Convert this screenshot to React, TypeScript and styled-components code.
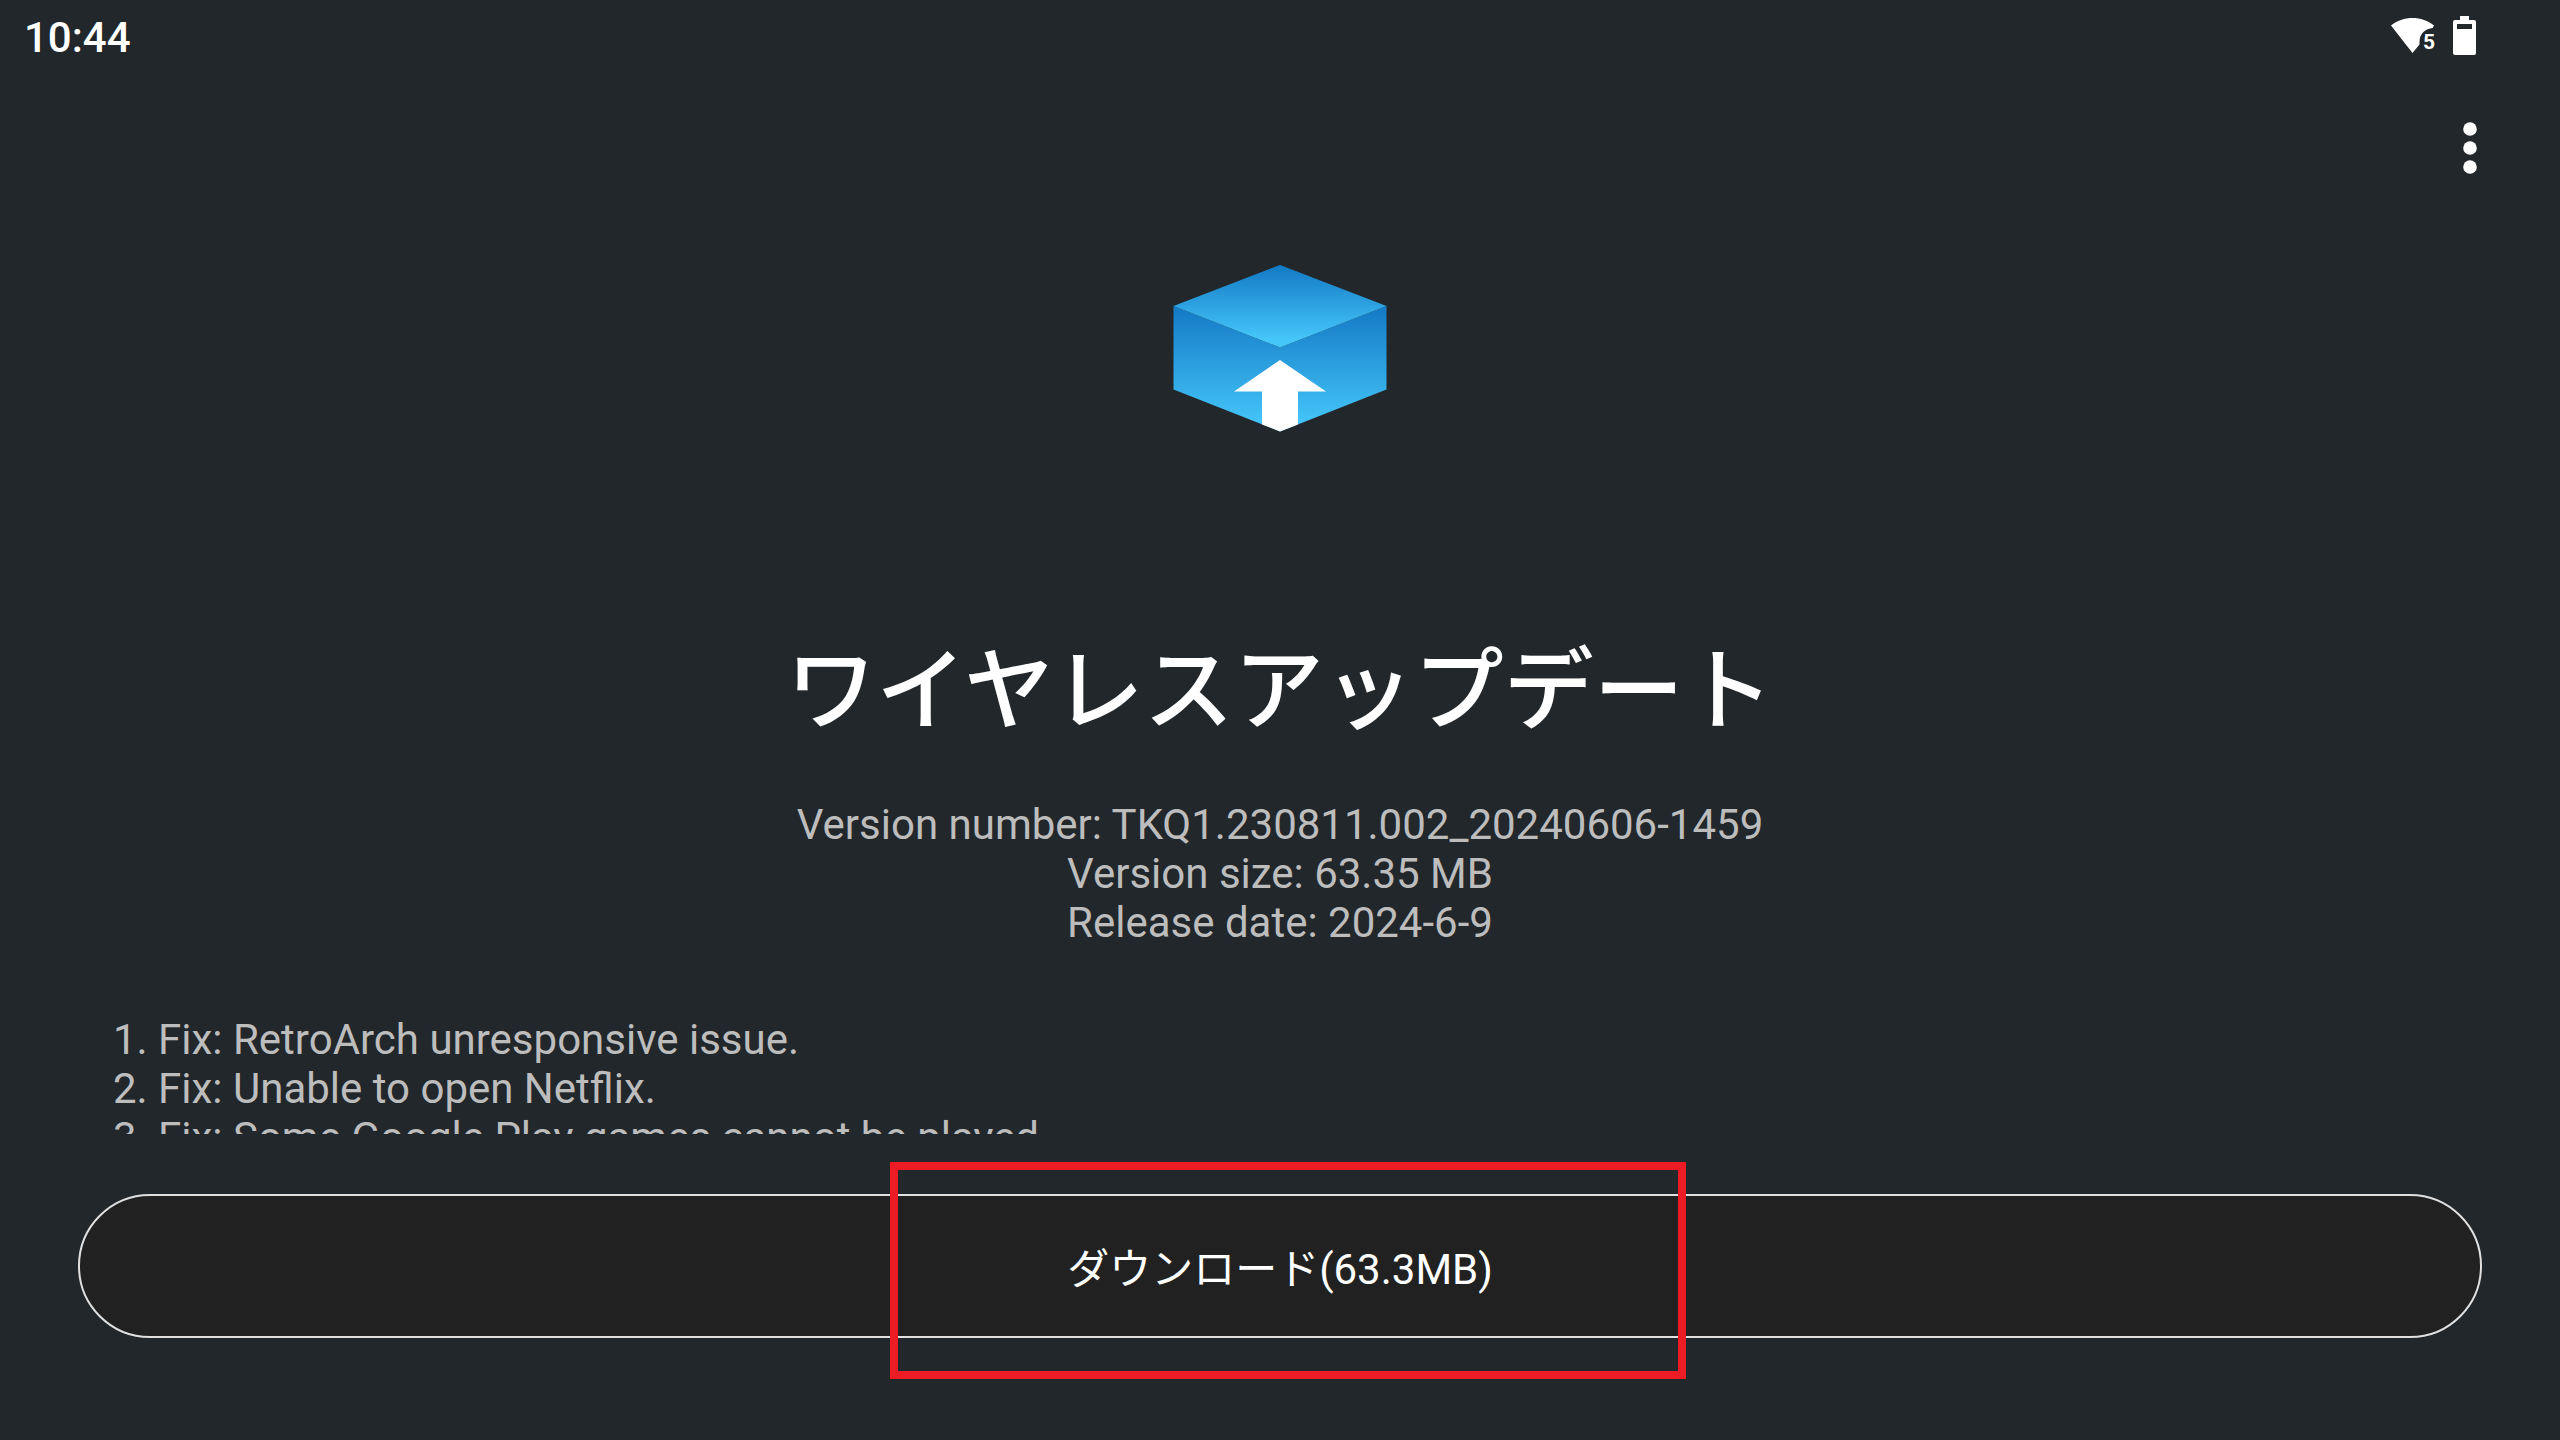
import React from "react";
import styled, { createGlobalStyle } from "styled-components";

const GlobalStyle = createGlobalStyle`
  * {
    box-sizing: border-box;
  }
  body {
    margin: 0;
    background: #22272b;
    color: #ffffff;
    font-family: Roboto, "Noto Sans CJK JP", sans-serif;
    font-size: 42px;
    line-height: 49px;
  }
`;

const Screen = styled.div`
  display: flex;
  flex-direction: column;
  height: 100vh;
  overflow: hidden;
`;

const StatusBar = styled.header`
  display: flex;
  align-items: center;
  justify-content: space-between;
  height: 74px;
  padding: 0 84px 0 24px;
`;

const Clock = styled.time`
  font-weight: 500;
`;

const StatusIcons = styled.div`
  display: flex;
  align-items: center;
  gap: 18px;
  padding-bottom: 2px;
`;

const Toolbar = styled.div`
  display: flex;
  justify-content: flex-end;
  height: 148px;
  padding: 44px 60px 0 0;
`;

const MenuButton = styled.button`
  display: flex;
  align-items: center;
  justify-content: center;
  width: 60px;
  height: 60px;
  padding: 0;
  border: 0;
  background: none;
  color: inherit;
  cursor: pointer;
`;

const Main = styled.main`
  display: flex;
  flex: 1;
  flex-direction: column;
  min-height: 0;
  padding-top: 42px;
`;

const Logo = styled.svg`
  display: block;
  align-self: center;
  flex-shrink: 0;
`;

const Title = styled.h1`
  margin: 195px 0 0;
  font-size: 90px;
  font-weight: 500;
  line-height: 130px;
  text-align: center;
`;

const VersionInfo = styled.div`
  margin-top: 43px;
  color: #bdbdbd;
  text-align: center;
`;

const VersionLine = styled.p`
  margin: 0;
`;

const Notes = styled.ol`
  flex: 1 1 0;
  min-height: 0;
  margin: 68px 113px 0;
  padding: 0;
  overflow: hidden;
  color: #bdbdbd;
  list-style: none;
`;

const Footer = styled.footer`
  position: relative;
  padding: 60px 78px 102px;
`;

const DownloadButton = styled.button`
  display: block;
  width: 100%;
  height: 144px;
  padding: 6px 0 0;
  border: 2px solid #e0e0e0;
  border-radius: 72px;
  background: #212121;
  color: #ffffff;
  font: inherit;
  cursor: pointer;
`;

const Highlight = styled.div`
  position: absolute;
  top: 28px;
  left: calc(50% - 390px);
  width: 796px;
  height: 217px;
  border: 8px solid #ed1c24;
  pointer-events: none;
`;

const versionLines = [
  "Version number: TKQ1.230811.002_20240606-1459",
  "Version size: 63.35 MB",
  "Release date: 2024-6-9",
];

const releaseNotes = [
  "Fix: RetroArch unresponsive issue.",
  "Fix: Unable to open Netflix.",
  "Fix: Some Google Play games cannot be played.",
];

function WifiIcon() {
  return (
    <svg width="44" height="40" viewBox="0 0 44 40" fill="#ffffff" aria-label="Wi-Fi 5">
      <path d="M0 9.5C6 4.5 13.5 2 21.500 2S37 4.500 43 9.500L41.800 12C34.500 12.500 28.500 17.500 28.500 26V28.500L21.500 37Z" />
      <text x="32" y="33" fontFamily="Roboto, sans-serif" fontSize="21" fontWeight="700">
        5
      </text>
    </svg>
  );
}

function BatteryIcon() {
  return (
    <svg width="23" height="40" viewBox="0 0 23 40" fill="#ffffff" aria-label="Battery">
      <path
        fillRule="evenodd"
        d="M7 0H16V4H21Q23 4 23 6V37Q23 39 21 39H2Q0 39 0 37V6Q0 4 2 4H7ZM4 8V13H19V8Z"
      />
    </svg>
  );
}

function MoreIcon() {
  return (
    <svg width="14" height="52" viewBox="0 0 14 52" fill="#ffffff" aria-hidden="true">
      <circle cx="7" cy="7" r="6.800" />
      <circle cx="7" cy="26" r="6.800" />
      <circle cx="7" cy="45" r="6.800" />
    </svg>
  );
}

function BoxLogo() {
  return (
    <Logo width="214" height="168" viewBox="0 0 214 168" aria-hidden="true">
      <defs>
        <linearGradient id="lid" x1="0" y1="0" x2="0" y2="1">
          <stop offset="0.050" stopColor="#157dc8" />
          <stop offset="0.900" stopColor="#45c6f9" />
        </linearGradient>
        <linearGradient id="body" x1="0" y1="0" x2="0" y2="1">
          <stop offset="0.050" stopColor="#157dc8" />
          <stop offset="0.950" stopColor="#45c6f9" />
        </linearGradient>
      </defs>
      <path d="M0.500 42L107 83.500L213.500 42V125.500L107 167.500L0.500 125.500Z" fill="url(#body)" />
      <path d="M107 1L213.500 42L107 83.500L0.500 42Z" fill="url(#lid)" />
      <path d="M107 96L153 127.500H125V160.400L107 167.500L89 160.400V127.500H61Z" fill="#ffffff" />
    </Logo>
  );
}

export default function App() {
  return (
    <Screen>
      <GlobalStyle />
      <StatusBar>
        <Clock>10:44</Clock>
        <StatusIcons>
          <WifiIcon />
          <BatteryIcon />
        </StatusIcons>
      </StatusBar>
      <Toolbar>
        <MenuButton type="button" aria-label="メニュー">
          <MoreIcon />
        </MenuButton>
      </Toolbar>
      <Main>
        <BoxLogo />
        <Title>ワイヤレスアップデート</Title>
        <VersionInfo>
          {versionLines.map((line) => (
            <VersionLine key={line}>{line}</VersionLine>
          ))}
        </VersionInfo>
        <Notes>
          {releaseNotes.map((note, index) => (
            <li key={note}>
              {index + 1}. {note}
            </li>
          ))}
        </Notes>
      </Main>
      <Footer>
        <DownloadButton type="button">ダウンロード(63.3MB)</DownloadButton>
        <Highlight />
      </Footer>
    </Screen>
  );
}
